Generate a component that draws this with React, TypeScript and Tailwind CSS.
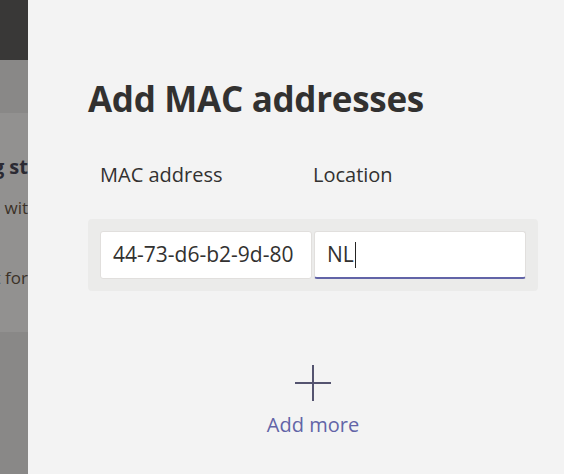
import React from 'react'

function Backdrop() {
  return (
    <div className="w-[28px] h-full flex flex-col overflow-hidden shrink-0">
      <div className="h-[60px] bg-[#393837]" />
      <div className="h-[53px] bg-[#898887]" />
      <div className="h-[219px] bg-[#929190] flex flex-col text-[#2b2a33]">
        <div className="mt-[41px] h-[26px] flex justify-end whitespace-nowrap font-bold text-[20px] leading-[26px]">
          Getting st
        </div>
        <div className="mt-[17px] h-[22px] flex justify-end whitespace-nowrap text-[17px] leading-[22px] text-[#3b3128]">
          Stay in the loop, one wit
        </div>
        <div className="mt-[48px] h-[22px] flex justify-end whitespace-nowrap text-[17px] leading-[22px] text-[#3b3128]">
          Use it for
        </div>
      </div>
      <div className="flex-1 bg-[#898887]" />
    </div>
  )
}

export default function App() {
  return (
    <div
      className="w-[564px] h-[474px] flex overflow-hidden"
      style={{ fontFamily: '"Open Sans", "Noto Sans", sans-serif' }}
    >
      <Backdrop />
      <div className="flex-1 bg-[#f3f3f3] pl-[60px] pr-[26px] pt-[77px]">
        <h1 className="text-[35px] leading-[44px] font-bold text-[#323130] tracking-[-0.3px]">
          Add MAC addresses
        </h1>
        <div className="mt-[42px] flex px-[12px] text-[20px] leading-[24px] text-[#323130]">
          <div className="w-[213px]">MAC address</div>
          <div>Location</div>
        </div>
        <div className="mt-[32px] bg-[#ebebea] rounded-[4px] p-[12px] flex gap-[2px]">
          <div className="w-[212px] h-[48px] bg-white border border-[#e1dfdd] rounded-[3px] px-[12px] flex items-center text-[21px] text-[#323130]">
            44-73-d6-b2-9d-80
          </div>
          <div className="flex-1 h-[48px] bg-white border border-[#e1dfdd] border-b-[2px] border-b-[#6264a7] rounded-[3px] px-[12px] flex items-center text-[21px] text-[#323130]">
            NL
            <span className="w-px h-[26px] bg-[#252423] ml-[1px]" />
          </div>
        </div>
        <div className="mt-[74px] flex flex-col items-center">
          <svg width="36" height="36" viewBox="0 0 36 36" fill="none" stroke="#54536f" strokeWidth="2">
            <line x1="18" y1="0" x2="18" y2="36" />
            <line x1="0" y1="18" x2="36" y2="18" />
          </svg>
          <div className="mt-[12px] text-[20px] leading-[24px] text-[#6264a7]">Add more</div>
        </div>
      </div>
    </div>
  )
}
